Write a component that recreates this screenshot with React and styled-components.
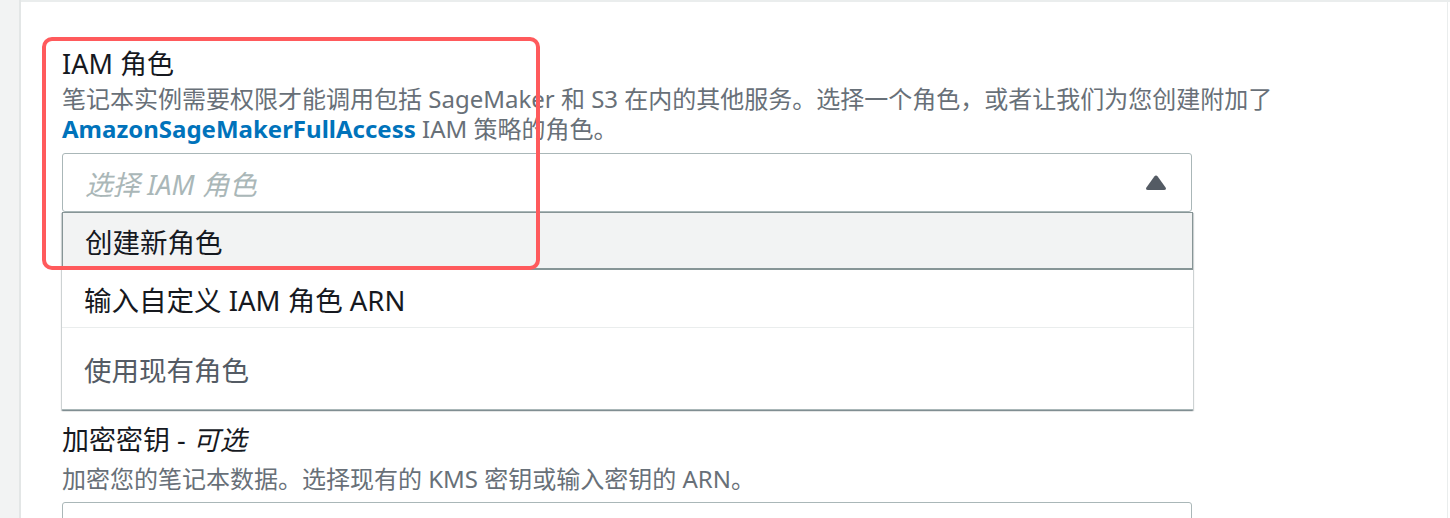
import React from 'react';
import styled, { createGlobalStyle } from 'styled-components';

const GlobalStyle = createGlobalStyle`
  html, body {
    margin: 0;
    padding: 0;
    background: #ffffff;
    font-family: "Noto Sans", "Noto Sans CJK SC", sans-serif;
    color: #16191f;
  }
`;

const Page = styled.div`
  position: relative;
  display: flex;
  width: 1450px;
  height: 518px;
  overflow: hidden;
  background: #ffffff;
`;

const SideStrip = styled.div`
  width: 19px;
  flex-shrink: 0;
  background: #f2f3f3;
  border-right: 2px solid #e3e6e6;
`;

const Main = styled.div`
  flex: 1;
  display: flex;
  flex-direction: column;
`;

const TopStrip = styled.div`
  height: 9px;
  background: #fafafa;
  border-bottom: 2px solid #eaeded;
`;

const Panel = styled.div`
  flex: 1;
  margin-right: 2px;
  border-right: 1px solid #eaeded;
  padding: 45px 0 0 41px;
`;

const Field = styled.div`
  display: flex;
  flex-direction: column;
  width: 1130px;
  margin-top: ${p => p.$gap || 0}px;
`;

const Label = styled.div`
  font-size: 27px;
  line-height: 34px;
  color: #16191f;

  em {
    font-style: italic;
  }
`;

const Description = styled.div`
  margin-top: ${p => p.$gap || 3}px;
  width: 1340px;
  font-size: 24px;
  line-height: 30px;
  color: #687078;

  a {
    color: #0073bb;
    font-weight: 700;
    text-decoration: none;
  }
`;

const SelectBox = styled.div`
  box-sizing: border-box;
  height: 59px;
  margin-top: ${p => p.$gap || 9}px;
  display: flex;
  align-items: center;
  justify-content: space-between;
  padding: 0 24px 0 22px;
  border: 1px solid #aab7b8;
  border-radius: 3px;
  background: #ffffff;
`;

const Placeholder = styled.span`
  font-size: 27.5px;
  font-style: italic;
  color: #aab7b8;
`;

const Caret = styled.svg`
  width: 22px;
  height: 16px;
  fill: #545b64;
`;

const Menu = styled.div`
  width: 1131px;
  background: #ffffff;
  box-shadow: 0 1px 1px 0 rgba(0, 28, 36, 0.3), 1px 1px 1px 0 rgba(0, 28, 36, 0.15),
    -1px 1px 1px 0 rgba(0, 28, 36, 0.15);
  border-bottom: 1px solid #aab7b8;
`;

const Option = styled.div`
  box-sizing: border-box;
  height: ${p => p.$height || 58}px;
  display: flex;
  align-items: center;
  padding-left: 22px;
  font-size: 27.5px;
  color: ${p => (p.$muted ? '#545b64' : '#16191f')};
  background: ${p => (p.$active ? '#f2f3f3' : '#ffffff')};
  border: ${p => (p.$active ? '1px solid #879596' : 'none')};
  border-bottom: ${p => (p.$active ? '2px solid #879596' : p.$divider ? '1px solid #eaeded' : 'none')};
`;

const Highlight = styled.div`
  position: absolute;
  left: 42px;
  top: 37px;
  width: 498px;
  height: 233px;
  box-sizing: border-box;
  border: 4px solid #ff5a5c;
  border-radius: 10px;
  pointer-events: none;
`;

export default function App() {
  return (
    <Page>
      <GlobalStyle />
      <SideStrip />
      <Main>
        <TopStrip />
        <Panel>
          <Field>
            <Label>IAM 角色</Label>
            <Description>
              笔记本实例需要权限才能调用包括 SageMaker 和 S3 在内的其他服务。选择一个角色，或者让我们为您创建附加了
              <br />
              <a href="#">AmazonSageMakerFullAccess</a> IAM 策略的角色。
            </Description>
            <SelectBox>
              <Placeholder>选择 IAM 角色</Placeholder>
              <Caret viewBox="0 0 22 16">
                <path d="M9.3 1.6 Q11 -0.4 12.7 1.6 L20.6 12.4 Q21.8 15 19 15 L3 15 Q0.2 15 1.4 12.4 Z" />
              </Caret>
            </SelectBox>
            <Menu>
              <Option $active>创建新角色</Option>
              <Option $divider>输入自定义 IAM 角色 ARN</Option>
              <Option $muted $height={81}>使用现有角色</Option>
            </Menu>
          </Field>
          <Field $gap={13}>
            <Label>
              加密密钥 - <em>可选</em>
            </Label>
            <Description $gap={7}>加密您的笔记本数据。选择现有的 KMS 密钥或输入密钥的 ARN。</Description>
            <SelectBox $gap={8} />
          </Field>
        </Panel>
      </Main>
      <Highlight />
    </Page>
  );
}
